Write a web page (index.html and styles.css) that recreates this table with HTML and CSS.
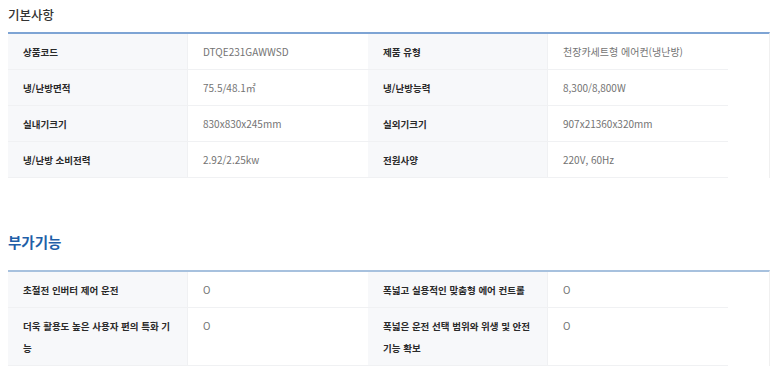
FILE: index.html
```html
<!DOCTYPE html>
<html lang="ko">
<head>
<meta charset="utf-8">
<link rel="stylesheet" href="styles.css">
</head>
<body>
<div class="page">
  <h2 class="title">기본사항</h2>
  <div class="spec spec-basic">
    <div class="grid">
      <div class="th">상품코드</div><div class="td">DTQE231GAWWSD</div>
      <div class="th">제품 유형</div><div class="td">천장카세트형 에어컨(냉난방)</div>
      <div class="th">냉/난방면적</div><div class="td">75.5/48.1㎡</div>
      <div class="th">냉/난방능력</div><div class="td">8,300/8,800W</div>
      <div class="th">실내기크기</div><div class="td">830x830x245mm</div>
      <div class="th">실외기크기</div><div class="td">907x21360x320mm</div>
      <div class="th">냉/난방 소비전력</div><div class="td">2.92/2.25kw</div>
      <div class="th">전원사양</div><div class="td">220V, 60Hz</div>
    </div>
  </div>

  <h2 class="title title-blue">부가기능</h2>
  <div class="spec spec-extra">
    <div class="grid">
      <div class="th">초절전 인버터 제어 운전</div><div class="td">O</div>
      <div class="th">폭넓고 실용적인 맞춤형 에어 컨트롤</div><div class="td">O</div>
      <div class="th">더욱 활용도 높은 사용자 편의 특화 기능</div><div class="td">O</div>
      <div class="th">폭넓은 운전 선택 범위와 위생 및 안전 기능 확보</div><div class="td">O</div>
    </div>
  </div>
</div>
</body>
</html>
```

FILE: styles.css
```css
html, body {
  margin: 0;
  padding: 0;
  background: #ffffff;
}

body {
  font-family: "Noto Sans CJK KR", "Noto Sans", sans-serif;
  color: #333333;
}

.page {
  padding: 0 8px;
  width: 762px;
}

.title {
  margin: 0 0 2px;
  font-size: 12.5px;
  line-height: 30px;
  font-weight: 500;
  color: #333333;
}

.title-blue {
  margin-top: 49px;
  margin-bottom: 13px;
  font-size: 14.5px;
  color: #1f5fa8;
  font-weight: 700;
}

.spec {
  border-top: 2px solid #7ea4d4;
  border-right: 1px solid #f0f0f0;
}

.spec-extra {
  border-top-color: #a7c1de;
}

.grid {
  display: grid;
  grid-template-columns: 180px 180px 180px 180px;
}

.th,
.td {
  padding: 7px 15px 6px;
  line-height: 22px;
  border-bottom: 1px solid #f0f1f3;
}

.th {
  background: #f7f8fa;
  font-size: 9.5px;
  font-weight: 700;
  color: #2a2a2a;
  border-right: 1px solid #f0f1f3;
}

.td {
  background: #ffffff;
  font-size: 10px;
  color: #737373;
  font-weight: 400;
}
```
